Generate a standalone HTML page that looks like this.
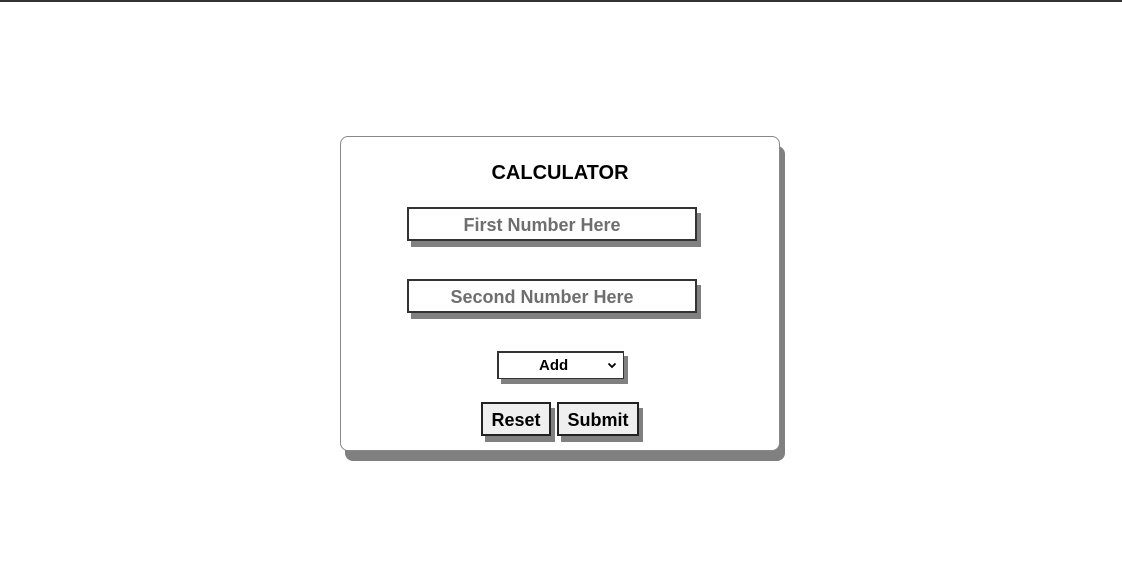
<!DOCTYPE html>
<html><head><style>
body{margin:0;width:1122px;height:573px;background:#fff;position:relative;font-family:"Comic Sans MS","Liberation Sans",sans-serif;overflow:hidden}
.top{position:absolute;left:0;top:0;width:1122px;height:2px;background:#333}
.card{position:absolute;left:340px;top:136px;width:438px;height:313px;border:1px solid #888;border-radius:8px;background:#fff;box-shadow:5px 10px 0 #808080}
.t{position:absolute;width:100%;text-align:center;top:25px;font-weight:bold;font-size:20px;color:#000;left:0}
.in{position:absolute;box-sizing:border-box;border:2px solid #333;background:#fff;box-shadow:4px 6px 0 #808080;color:#6e6e6e;font-weight:bold;font-size:18px;text-align:center;line-height:32px}
.sel{position:absolute;box-sizing:border-box;border:2px solid #333;border-right-width:1px;border-bottom-width:1px;background:#fff;box-shadow:4px 5px 0 #808080;font-weight:bold;font-size:15px;line-height:26px}
.btn{position:absolute;box-sizing:border-box;border:2px solid #222;background:#efefef;box-shadow:4px 6px 0 #808080;font-weight:bold;font-size:18px;text-align:center;line-height:32px;color:#000}
</style></head><body>
<div class="top"></div>
<div class="card">
<div class="t">CALCULATOR</div>
<div class="in" style="left:66px;top:70px;width:290px;height:34px;"><span style="position:relative;left:-10px">First Number Here</span></div>
<div class="in" style="left:66px;top:142px;width:290px;height:34px;"><span style="position:relative;left:-10px">Second Number Here</span></div>
<div class="sel" style="left:156px;top:214px;width:127px;height:28px;"><span style="position:absolute;left:40px">Add</span><svg style="position:absolute;left:108px;top:9px" width="10" height="7" viewBox="0 0 10 7"><path d="M1.5 1.5L5 5L8.5 1.5" stroke="#000" stroke-width="1.8" fill="none"/></svg></div>
<div class="btn" style="left:140px;top:265px;width:70px;height:34px;">Reset</div>
<div class="btn" style="left:216px;top:265px;width:82px;height:34px;">Submit</div>
</div>
</body></html>
